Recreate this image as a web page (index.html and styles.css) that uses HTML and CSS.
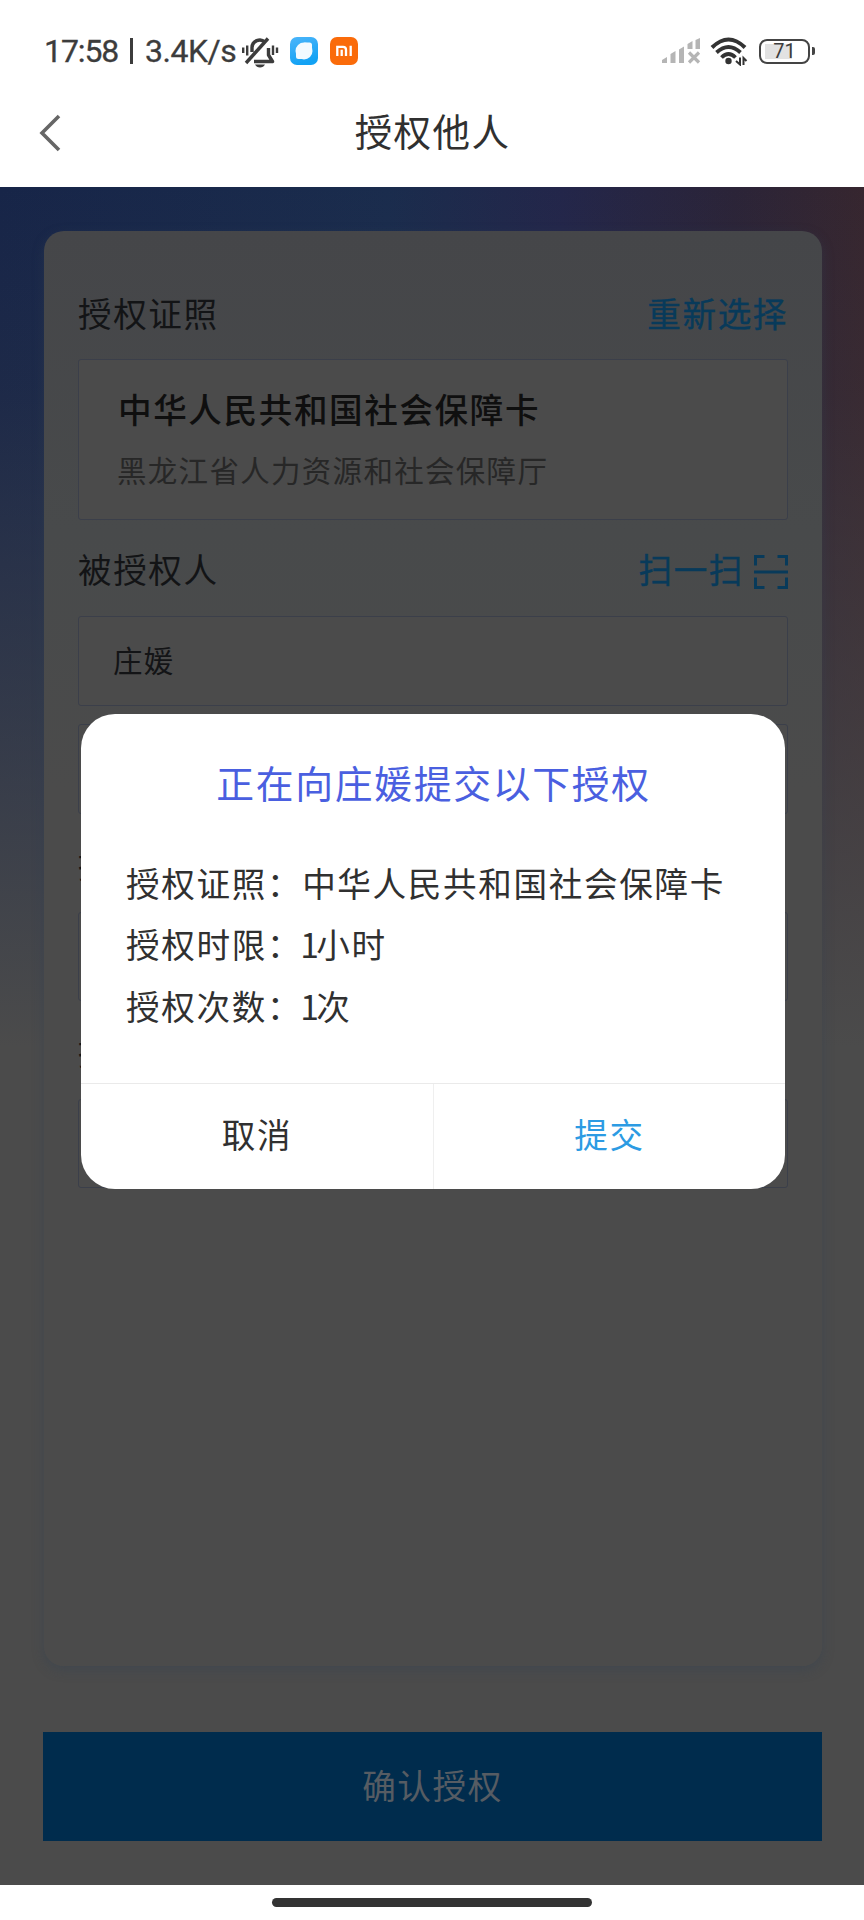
FILE: index.html
```html
<!DOCTYPE html>
<html lang="zh-CN">
<head>
<meta charset="utf-8">
<title>授权他人</title>
<link rel="stylesheet" href="styles.css">
</head>
<body>
<div class="phone">
  <div class="status">
    <span class="clock">17:58</span><span class="bar"></span><span class="speed">3.4K/s</span>
    <svg class="bell" width="38" height="32" viewBox="0 0 38 32" fill="none" stroke="#3c3c3c" stroke-width="3.4">
      <path d="M11 16V11.500a7.800 7.800 0 0 1 13-5.500M27.500 12v7l4 6.500H13" stroke-linejoin="round"/>
      <path d="M5 27L27 2.500"/>
      <path d="M14 28.500h10q-1.500 3-5 3t-5-3z" fill="#3c3c3c" stroke="none"/>
      <path d="M2.200 11.500v5.500M6.200 9.500v10M32 9.500v9.500M36 11.500v5.500" stroke-width="2.400"/>
    </svg>
    <svg class="app" width="28" height="28" viewBox="0 0 28 28">
      <defs><linearGradient id="sky" x1="0" y1="0" x2="0.300" y2="1"><stop offset="0" stop-color="#4cb5fa"/><stop offset="1" stop-color="#12a2f4"/></linearGradient></defs>
      <rect width="28" height="28" rx="7" fill="url(#sky)"/>
      <circle cx="14" cy="14" r="8.500" fill="#f2faff"/>
      <path d="M14 5.500h5.500q2.500 0 2.500 2.500v6zM6 14v5.500q0 2.500 2.500 2.500H14z" fill="#f2faff"/>
    </svg>
    <svg class="app mi" width="28" height="28" viewBox="0 0 28 28">
      <rect width="28" height="28" rx="7" fill="#fa6b0a"/>
      <path d="M7.300 19V9.800h5.700q3 0 3 3V19M11.700 12.800V19M20.700 8.800V19" fill="none" stroke="#fff" stroke-width="2.300"/>
    </svg>
    <div class="right">
      <svg width="39" height="26" viewBox="0 0 39 26" fill="#b5b5b5">
        <path d="M0 25v-3l5-3v6zM8.500 25V16l5-3v12zM17 25V11.500l5-3V25zM25.500 11V6l5-3v8zM33.500 11V2l4.500-2v11z"/>
        <path d="M27 14.500l10 10M37 14.500l-10 10" stroke="#b5b5b5" stroke-width="3.200"/>
      </svg>
      <svg class="wifi" width="38" height="29" viewBox="0 0 38 29" fill="none" stroke="#333">
        <path d="M2 10.500Q18.500-5.500 35 10.500" stroke-width="4"/>
        <path d="M6.500 15.500Q18.500 4.500 30.500 15.500M11.500 20.500Q18.500 13.500 25.500 20.500" stroke-width="3.800"/>
        <circle cx="18.500" cy="24" r="3.200" fill="#333" stroke="none"/>
        <path d="M30 20.500v7l-4-3.500M33.500 28v-7l3 3" stroke-width="2"/>
      </svg>
      <div class="battery"><span class="level">71</span><i class="cap"></i></div>
    </div>
  </div>
  <header class="nav">
    <svg class="back" width="22" height="38" viewBox="0 0 22 38" fill="none" stroke="#666" stroke-width="3.600"><path d="M20 2L3 19l17 17"/></svg>
    <h1>授权他人</h1>
  </header>
  <main class="page">
    <section class="card">
      <div class="label"><span>授权证照</span><a>重新选择</a></div>
      <div class="box license"><b>中华人民共和国社会保障卡</b><p>黑龙江省人力资源和社会保障厅</p></div>
      <div class="label second"><span>被授权人</span><a class="scan">扫一扫
        <svg width="34" height="34" viewBox="0 0 34 34" fill="none" stroke="#083a5a" stroke-width="3"><path d="M1.500 10.500v-9h9M23.500 1.500h9v9M1.500 22.500v10h9M23.500 32.500h9v-10M0 17h34"/></svg></a></div>
      <div class="box name">庄媛</div>
      <div class="box number"></div>
      <div class="label third"><span>授权时限</span></div>
      <div class="box limit"></div>
      <div class="label third"><span>授权次数</span></div>
      <div class="box limit"></div>
    </section>
    <button class="confirm">确认授权</button>
  </main>
  <footer class="home"><i></i></footer>
  <div class="dialog">
    <h2>正在向庄媛提交以下授权</h2>
    <div class="detail">
      <p>授权证照：中华人民共和国社会保障卡</p>
      <p>授权时限：<span class="num">1</span>小时</p>
      <p>授权次数：<span class="num">1</span>次</p>
    </div>
    <div class="actions"><button>取消</button><button class="submit">提交</button></div>
  </div>
</div>
</body>
</html>
```
FILE: styles.css
```css
* { box-sizing: border-box; margin: 0; padding: 0; }
body { width: 864px; background: #fff; font-family: "Noto Sans CJK SC", sans-serif; color: #303030; }
button { border: 0; background: none; font: inherit; color: inherit; letter-spacing: inherit; }
svg { display: block; flex: none; }
.phone { position: relative; width: 864px; height: 1920px; overflow: hidden; display: flex; flex-direction: column; }

.status { height: 77px; padding: 25px 49px 0 44px; display: flex; align-items: center; font: 400 32px/50px Roboto, sans-serif; color: #3c3c3c; }
.clock { width: 75px; letter-spacing: -1.100px; -webkit-text-stroke: 0.300px; }
.bar { width: 3px; height: 26px; margin: 0 12px 0 11px; background: #3c3c3c; }
.speed { width: 96px; letter-spacing: -0.500px; -webkit-text-stroke: 0.300px; }
.bell { margin-top: 1px; }
.app { margin-left: 11px; }
.mi { margin-left: 12px; }
.right { margin-left: auto; display: flex; align-items: center; }
.wifi { margin-left: 9px; }
.battery { display: flex; align-items: center; margin-left: 11px; }
.level { width: 51px; height: 25px; border: 2px solid #444; border-radius: 8px; font: 400 20px/21px Roboto, sans-serif; text-align: center; background: linear-gradient(#e2e2e2, #e2e2e2) 4px 3px / 27px 15px no-repeat; }
.cap { width: 3px; height: 8px; margin-left: 2px; border-radius: 0 2px 2px 0; background: #444; }

.nav { height: 110px; padding: 0 39px; display: grid; grid-template-columns: 22px 1fr 22px; align-items: center; }
.back { margin-top: 1px; }
.nav h1 { padding: 0 0 4px 1px; font-size: 37.500px; font-weight: 400; line-height: 50px; letter-spacing: 1.400px; text-align: center; }

.page { height: 1698px; padding: 44px 42px 0 43px; background:
  linear-gradient(180deg, rgba(75,75,75,0) 0, rgba(75,75,75,.12) 200px, rgba(75,75,75,.5) 500px, #4b4b4b 860px),
  linear-gradient(90deg, #172548 0, #1a2c4d 45%, #23264a 65%, #2b2438 85%, #36262f 100%); }
.card { height: 1435px; margin-left: 1px; padding: 50px 34px 0; border-radius: 20px; background: linear-gradient(180deg, #454649 0, #484a4b 300px, #4b4b4b 560px); box-shadow: 0 4px 12px rgba(50,66,82,.4); color: #131416; }
.label { height: 64px; display: flex; align-items: center; justify-content: space-between; font-size: 33.600px; line-height: 64px; letter-spacing: 1.600px; }
.label a { color: #083a5a; -webkit-text-stroke: 0.400px; }
.box { border: 1px solid #3b3f4a; border-radius: 3px; background: #4b4b4b; }
.license { height: 161px; margin-top: 14px; padding: 21px 39px; }
.license b { display: block; font-size: 33.600px; font-weight: 500; line-height: 56px; letter-spacing: 1.600px; color: #0f0f0f; }
.license p { margin-left: -1px; font-size: 29.500px; line-height: 64px; letter-spacing: 1.300px; color: #272727; }
.second { margin-top: 17px; }
.scan { display: flex; align-items: center; gap: 10px; }
.scan svg { margin-top: 6px; }
.name { height: 90px; margin-top: 15px; padding-left: 34px; font-size: 29.500px; line-height: 84px; letter-spacing: 1.200px; }
.number { height: 90px; margin-top: 18px; }
.third { margin-top: 18px; }
.limit { height: 89px; margin-top: 16px; }
.confirm { display: block; width: 100%; height: 109px; margin-top: 66px; padding-bottom: 5px; background: #002c4d; color: #565c63; font-size: 33.600px; letter-spacing: 1.600px; }

.home { height: 35px; display: flex; justify-content: center; padding-top: 13px; }
.home i { width: 320px; height: 9px; margin-right: 1px; border-radius: 5px; background: #333; }

.dialog { position: absolute; left: 81px; top: 713.500px; width: 704px; height: 475.500px; display: flex; flex-direction: column; border-radius: 34px; overflow: hidden; background: #fff; }
.dialog h2 { height: 138px; padding-left: 1px; font-size: 37.800px; font-weight: 400; line-height: 135px; letter-spacing: 1.700px; text-align: center; color: #4a5fe0; }
.detail { height: 231px; padding-left: 45px; font-size: 33.600px; line-height: 61.500px; letter-spacing: 1.650px; white-space: nowrap; }
.num { margin-left: -2px; letter-spacing: -2.500px; }
.actions { flex: 1; display: grid; grid-template-columns: 1fr 1fr; border-top: 1px solid #eaeaea; font-size: 33.600px; letter-spacing: 1.600px; }
.actions button { padding-bottom: 5px; }
.submit { border-left: 1px solid #efefef; color: #2c9be3; }
```
